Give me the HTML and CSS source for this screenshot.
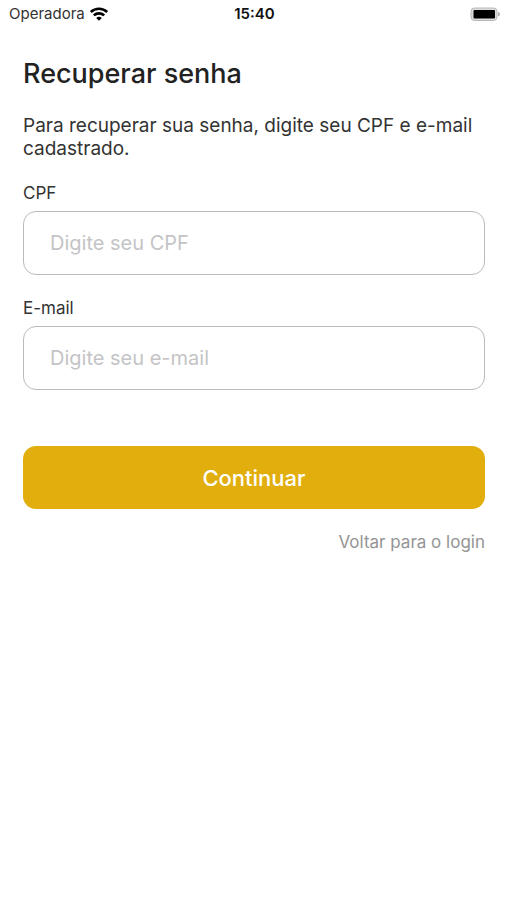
FILE: index.html
```html
<!DOCTYPE html>
<html lang="pt-BR">
<head>
  <meta charset="UTF-8">
  <meta name="viewport" content="width=device-width, initial-scale=1">
  <title>Recuperar senha</title>
  <link rel="stylesheet" href="styles.css">
</head>
<body>
  <header class="status-bar">
    <div class="carrier">
      <span>Operadora</span>
      <svg class="wifi" viewBox="0 0 20 14" aria-hidden="true">
        <path d="M1.8 5a12 12 0 0 1 16.4 0" />
        <path d="M4.8 8.4a7.6 7.6 0 0 1 10.4 0" />
        <path class="dot" d="M10 13.8l-2.8-2.7a4.1 4.1 0 0 1 5.6 0z" />
      </svg>
    </div>
    <time class="clock">15:40</time>
    <svg class="battery" viewBox="0 0 30 14" aria-hidden="true">
      <rect class="shell" x="1" y="1" width="26" height="12.5" rx="3.5" />
      <rect x="3.5" y="3" width="21.5" height="8.5" rx="1" />
      <path class="tip" d="M28 5q2 .6 2 2.2t-2 2.2z" />
    </svg>
  </header>

  <main class="page">
    <h1>Recuperar senha</h1>
    <p class="intro">Para recuperar sua senha, digite seu CPF e e-mail cadastrado.</p>

    <form class="recover-form">
      <label for="cpf">CPF</label>
      <input type="text" id="cpf" inputmode="numeric" placeholder="Digite seu CPF">

      <label for="email">E-mail</label>
      <input type="email" id="email" placeholder="Digite seu e-mail">

      <button type="submit">Continuar</button>
    </form>

    <a class="back-link" href="#login">Voltar para o login</a>
  </main>
</body>
</html>
```
FILE: styles.css
```css
* {
  box-sizing: border-box;
}

body {
  margin: 0;
  background: #fff;
  color: #333;
  font-family: Inter, "Liberation Sans", sans-serif;
}

.status-bar {
  display: grid;
  grid-template-columns: 1fr auto 1fr;
  align-items: center;
  height: 27px;
  padding: 0 7px 0 9px;
  font-size: 15px;
}

.carrier {
  display: flex;
  align-items: center;
  gap: 4px;
}

.wifi {
  width: 20px;
  height: 14px;
  fill: none;
  stroke: #000;
  stroke-width: 2.6;
}

.wifi .dot {
  fill: #000;
  stroke: none;
}

.clock {
  color: #111;
  font-weight: 600;
}

.battery {
  justify-self: end;
  width: 30px;
  height: 14px;
}

.battery .shell {
  fill: #ddd;
  stroke: #b8b8b8;
}

.battery .tip {
  fill: #b0b0b0;
}

.page {
  display: flex;
  flex-direction: column;
  padding: 29px 22px 24px 23px;
}

h1 {
  margin: 0;
  color: #222;
  font-size: 27px;
  font-weight: 500;
  line-height: 36px;
}

.intro {
  margin: 22px 0;
  font-size: 19px;
  line-height: 23px;
}

.recover-form {
  display: flex;
  flex-direction: column;
}

label {
  margin-bottom: 7px;
  font-size: 17px;
  line-height: 22px;
}

input {
  width: 100%;
  height: 64px;
  margin-bottom: 22px;
  padding: 0 26px;
  border: 1px solid #bbb;
  border-radius: 13px;
  background: #fff;
  color: #333;
  font-family: inherit;
  font-size: 20px;
}

input::placeholder {
  color: #c4c4c6;
}

button {
  height: 63px;
  margin-top: 34px;
  border: none;
  border-radius: 13px;
  background: #e1ae0d;
  color: #fff;
  font-family: inherit;
  font-size: 22px;
  font-weight: 500;
  cursor: pointer;
}

.back-link {
  align-self: flex-end;
  margin-top: 22px;
  color: #949494;
  font-size: 17px;
  line-height: 22px;
  text-decoration: none;
}
```
